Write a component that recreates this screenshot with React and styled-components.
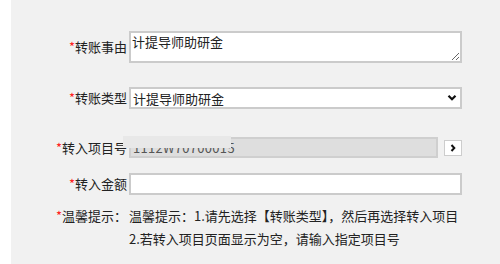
import React from "react";
import styled, { createGlobalStyle } from "styled-components";

const Global = createGlobalStyle`
  html, body { margin: 0; padding: 0; background: #fff; }
  body { font-family: "Noto Sans CJK SC", "Microsoft YaHei", sans-serif; }
`;

const Page = styled.div`
  display: flex;
  width: 500px;
  height: 264px;
  background: #fff;
`;

const Strip = styled.div`
  width: 11px;
  flex: none;
`;

const Panel = styled.div`
  flex: 1;
  background: #f1f1f1;
  padding-top: 31px;
  display: flex;
  flex-direction: column;
  font-size: 13px;
  color: #222;
`;

const Row = styled.div`
  display: flex;
  align-items: ${(p) => (p.$top ? "flex-start" : "center")};
  margin-top: ${(p) => p.$mt || 0}px;
  position: relative;
`;

const Label = styled.div`
  width: 116px;
  flex: none;
  text-align: right;
  white-space: nowrap;
  line-height: 20px;
  margin-right: 2px;
  color: #222;
`;

const Star = styled.span`
  color: #ff2222;
`;

const TextArea = styled.textarea`
  box-sizing: border-box;
  width: 333px;
  height: 32px;
  border: 2px solid #cbcbcb;
  background: #fff;
  font: inherit;
  font-size: 13px;
  line-height: 17px;
  color: #222;
  padding: 0 1px;
  margin: 0;
  resize: vertical;
  outline: none;
`;

const SelectWrap = styled.div`
  position: relative;
  width: 333px;
  height: 22px;
`;

const Select = styled.select`
  appearance: none;
  box-sizing: border-box;
  width: 100%;
  height: 22px;
  border: 2px solid #cbcbcb;
  background: #fff;
  font: inherit;
  font-size: 13px;
  color: #222;
  padding: 0 0 0 2px;
  margin: 0;
  outline: none;
`;

const Chevron = styled.svg`
  position: absolute;
  right: 5px;
  top: 7px;
  pointer-events: none;
`;

const ProjectBox = styled.div`
  box-sizing: border-box;
  width: 309px;
  height: 21px;
  border: 2px solid #cfcfcf;
  background: #dedede;
  color: #555;
  font-size: 13px;
  line-height: 17px;
  padding-left: 2px;
  overflow: hidden;
  letter-spacing: 0.3px;
`;

const Mask = styled.div`
  position: absolute;
  left: 112px;
  top: -1px;
  width: 108px;
  height: 12px;
  background: #e8e8e8;
`;

const ArrowButton = styled.button`
  box-sizing: border-box;
  width: 18px;
  height: 16px;
  margin-left: 6px;
  border: 1px solid #cdcdcd;
  background: #fff;
  padding: 0;
  display: flex;
  align-items: center;
  justify-content: center;
`;

const Input = styled.input`
  box-sizing: border-box;
  width: 333px;
  height: 22px;
  border: 2px solid #cbcbcb;
  background: #fff;
  margin: 0;
  outline: none;
`;

const Tips = styled.div`
  display: flex;
  flex-direction: column;
`;

const TipLine = styled.div`
  white-space: nowrap;
  line-height: 23px;
  color: #222;
`;

const TipLabel = styled(Label)`
  line-height: 23px;
  margin-right: 2px;
`;

export default function App() {
  return (
    <>
      <Global />
      <Page>
        <Strip />
        <Panel>
          <Row>
            <Label>
              <Star>*</Star>转账事由
            </Label>
            <TextArea defaultValue="计提导师助研金" />
          </Row>
          <Row $mt={24}>
            <Label>
              <Star>*</Star>转账类型
            </Label>
            <SelectWrap>
              <Select defaultValue="a">
                <option value="a">计提导师助研金</option>
              </Select>
              <Chevron width="10" height="8" viewBox="0 0 10 8">
                <path d="M1.5 1.8 L5 5.3 L8.5 1.8" fill="none" stroke="#111" strokeWidth="2.2" />
              </Chevron>
            </SelectWrap>
          </Row>
          <Row $mt={28}>
            <Label>
              <Star>*</Star>转入项目号
            </Label>
            <ProjectBox>1112W70700015</ProjectBox>
            <ArrowButton>
              <svg width="6" height="8" viewBox="0 0 6 8">
                <path d="M1.5 1 L4.3 4 L1.5 7" fill="none" stroke="#111" strokeWidth="2" />
              </svg>
            </ArrowButton>
            <Mask />
          </Row>
          <Row $mt={15}>
            <Label>
              <Star>*</Star>转入金额
            </Label>
            <Input />
          </Row>
          <Row $mt={9} $top>
            <TipLabel>
              <Star>*</Star>温馨提示：
            </TipLabel>
            <Tips>
              <TipLine>温馨提示：1.请先选择【转账类型】，然后再选择转入项目</TipLine>
              <TipLine>2.若转入项目页面显示为空，请输入指定项目号</TipLine>
            </Tips>
          </Row>
        </Panel>
      </Page>
    </>
  );
}
